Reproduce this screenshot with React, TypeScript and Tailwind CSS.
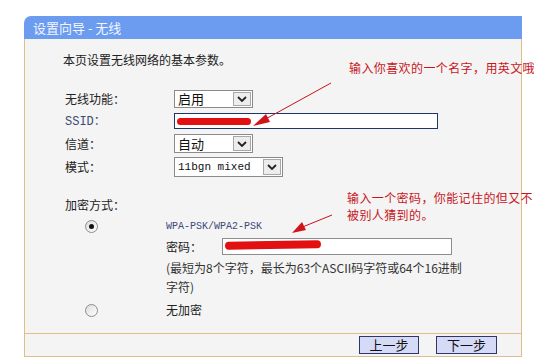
const cjk = "font-['SimSun','Noto_Sans_CJK_SC',sans-serif]";
const mono = "font-['Liberation_Mono','Noto_Sans_CJK_SC',monospace]";

const Chevron = () => (
  <svg width="10" height="6" viewBox="0 0 10 6">
    <polyline points="1,1 5,5 9,1" fill="none" stroke="#222" strokeWidth="1.8" />
  </svg>
);

const Select = ({ value, width, monoText }: { value: string; width: string; monoText?: boolean }) => (
  <div className={`flex h-full ${width} border border-[#8a8a8a] bg-white`}>
    <div className={`flex-1 pl-[3px] flex items-center text-[#111] ${monoText ? `${mono} text-[11px]` : "text-[13px]"}`}>
      {value}
    </div>
    <div className="w-[18px] m-[1px] border border-[#a8a8a8] bg-[#ededed] flex items-center justify-center">
      <Chevron />
    </div>
  </div>
);

const Radio = ({ checked }: { checked?: boolean }) => (
  <div className="w-[13px] h-[13px] rounded-full border border-[#8c8c8c] bg-gradient-to-br from-[#dcdcdc] to-white flex items-center justify-center">
    {checked && <div className="w-[5px] h-[5px] rounded-full bg-[#111]" />}
  </div>
);

const Scribble = ({ className }: { className: string }) => (
  <div className={`absolute rounded-full bg-[#e21010] ${className}`} />
);

export default function App() {
  return (
    <div className={`relative w-[534px] h-[363px] bg-white overflow-hidden text-[12px] text-[#222] ${cjk}`}>
      <div className="ml-[24px] pt-[16px] w-[498px]">
        <div className="h-[23px] bg-[#6b9cef] rounded-tl-[7px] pl-[9px] leading-[23px] text-[13px] text-[#f2f5ff] whitespace-pre">
          设置向导 - 无线
        </div>
        <div className="border-x border-b border-[#e0bd8a] bg-[#f4f4f4]">
          <div className="h-[294px] pl-[38px] pt-[13px] flex flex-col">
            <div className="leading-[16px]">本页设置无线网络的基本参数。</div>

            <div className="mt-[22px] h-[18px] flex items-center">
              <div className="w-[111px] pl-[2px]">无线功能：</div>
              <Select value="启用" width="w-[79px]" />
            </div>
            <div className="mt-[5px] h-[16px] flex items-center">
              <div className={`w-[111px] pl-[2px] ${mono} text-[12px] text-[#3c4a6e]`}>SSID<span className={cjk}>：</span></div>
              <div className="relative h-full w-[264px] border border-[#1f3768] bg-white">
                <Scribble className="left-[2px] top-[4px] w-[74px] h-[7px]" />
              </div>
            </div>
            <div className="mt-[5px] h-[19px] flex items-center">
              <div className="w-[111px] pl-[2px]">信道：</div>
              <Select value="自动" width="w-[79px]" />
            </div>
            <div className="mt-[4px] h-[20px] flex items-center">
              <div className="w-[111px] pl-[2px]">模式：</div>
              <Select value="11bgn mixed" width="w-[109px]" monoText />
            </div>

            <div className="mt-[20px] leading-[16px] pl-[2px]">加密方式：</div>
            <div className="mt-[5px] h-[16px] flex items-center">
              <div className="w-[103px] pl-[22px]"><Radio checked /></div>
              <div className={`${mono} text-[10px] text-[#3b4a7a]`}>WPA-PSK/WPA2-PSK</div>
            </div>
            <div className="mt-[4px] h-[17px] flex items-center">
              <div className="w-[103px]" />
              <div className="w-[56px]">密码：</div>
              <div className="relative h-full w-[230px] border border-[#8d8d8d] bg-white">
                <Scribble className="left-[2px] top-[2px] w-[96px] h-[8px] -rotate-1" />
              </div>
            </div>
            <div className="mt-[3px] flex">
              <div className="w-[103px]" />
              <div className="leading-[19px] text-[#333]">
                (最短为8个字符，最长为63个ASCII码字符或64个16进制
                <br />
                字符)
              </div>
            </div>
            <div className="mt-[6px] h-[16px] flex items-center">
              <div className="w-[103px] pl-[22px]"><Radio /></div>
              <div>无加密</div>
            </div>
          </div>
          <div className="h-[23px] border-t border-[#e0bd8a] flex items-center justify-end gap-[17px] pr-[24px]">
            <button className="w-[60px] h-[18px] bg-[#d5dbf7] border border-[#2e3768] text-[13px] leading-[16px] text-[#111]">上一步</button>
            <button className="w-[61px] h-[18px] bg-[#d5dbf7] border border-[#2e3768] text-[13px] leading-[16px] text-[#111]">下一步</button>
          </div>
        </div>
      </div>

      <div className="absolute left-[349px] top-[60px] whitespace-nowrap text-[12px] tracking-[0.4px] leading-[16px] text-[#c8161c]">
        输入你喜欢的一个名字，用英文哦
      </div>
      <div className="absolute left-[347px] top-[189px] whitespace-nowrap text-[12px] tracking-[0.4px] leading-[17px] text-[#c8161c]">
        <div>输入一个密码，你能记住的但又不</div>
        <div>被别人猜到的。</div>
      </div>

      <svg className="absolute left-0 top-0" width="534" height="363">
        <line x1="331" y1="83" x2="262" y2="121" stroke="#c4141a" strokeWidth="1" />
        <polygon points="253,126 266,114 270,122" fill="#d0141a" />
        <line x1="332" y1="215" x2="300" y2="228" stroke="#c4141a" strokeWidth="1" />
        <polygon points="292,233 302,222 306,230" fill="#d0141a" />
      </svg>
    </div>
  );
}
